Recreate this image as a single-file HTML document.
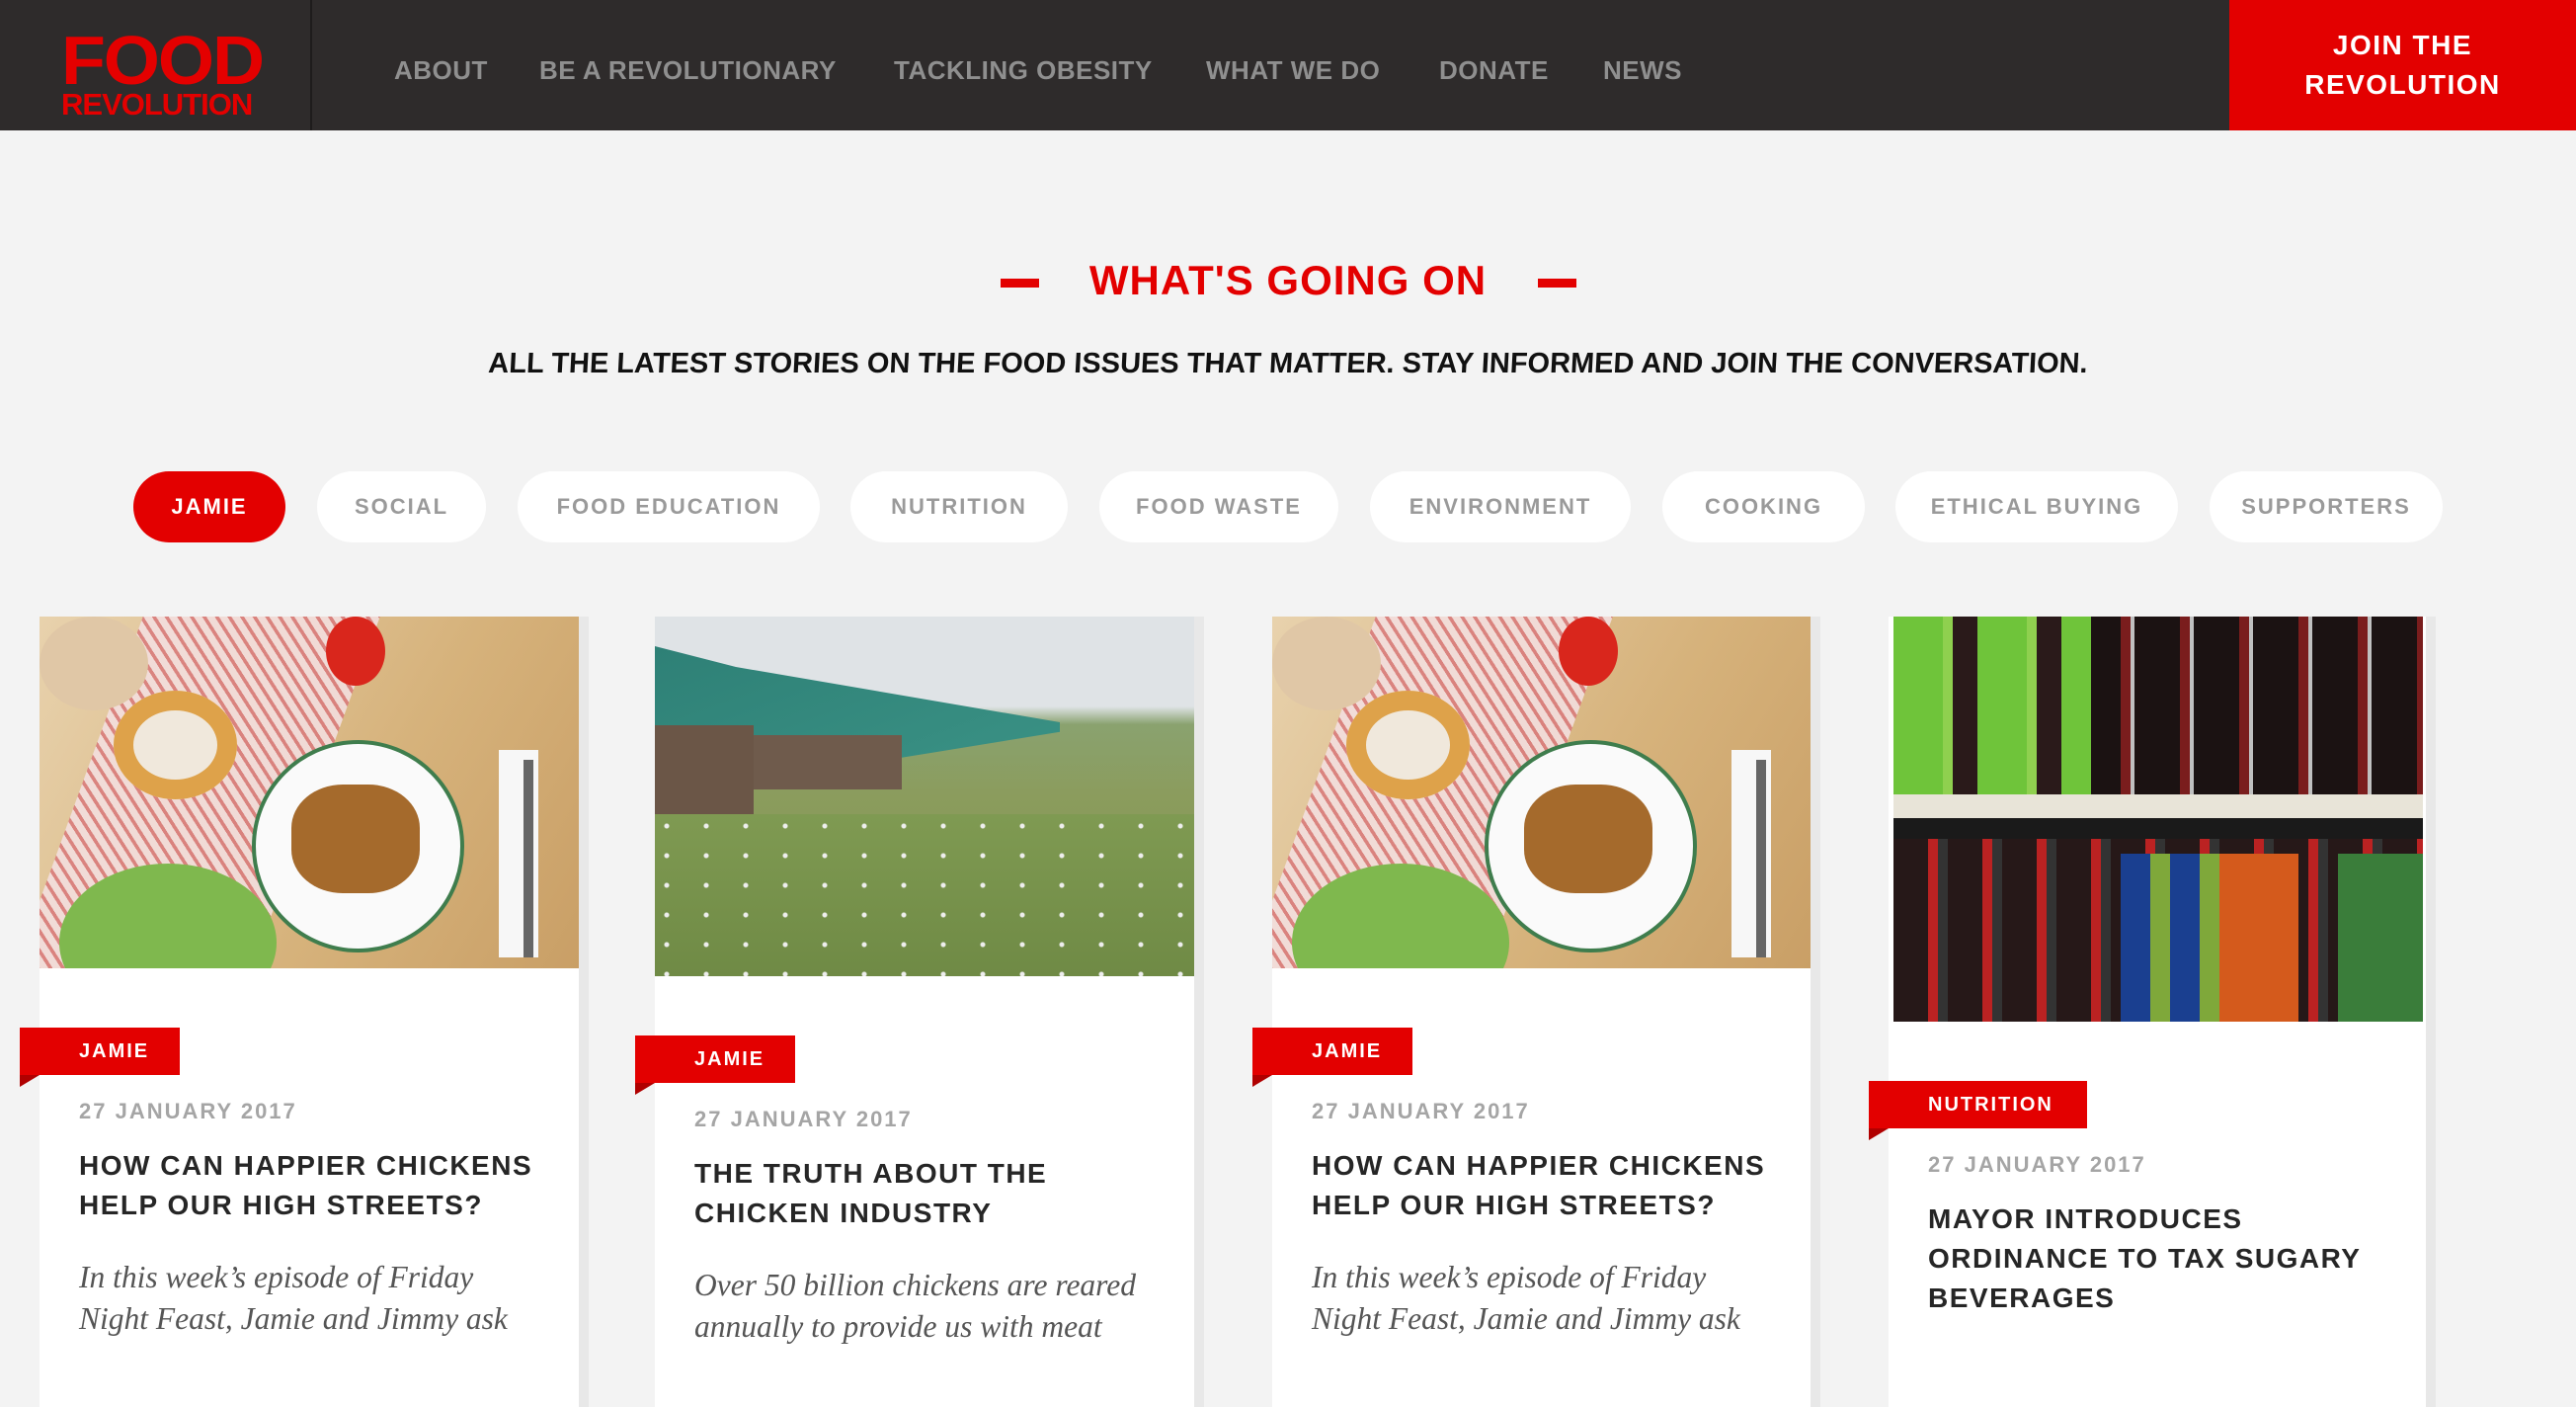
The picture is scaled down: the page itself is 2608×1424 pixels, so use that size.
<!DOCTYPE html>
<html><head><meta charset="utf-8"><style>
*{margin:0;padding:0;box-sizing:border-box}
body{width:2608px;height:1370px;overflow:hidden;background:#f3f3f3;font-family:"Liberation Sans",sans-serif;position:relative}
.hdr{position:absolute;left:0;top:0;width:2608px;height:132px;background:#2e2b2b}
.logo{position:absolute;left:62px;top:26px;color:#e40000;font-weight:bold;line-height:1}
.logo .a{font-size:70px;letter-spacing:-2px;transform:scaleX(1.05);transform-origin:left;display:block;height:62px}
.logo .b{font-size:31px;letter-spacing:-1px;display:block;margin-top:2px}
.div{position:absolute;left:314px;top:0;width:2px;height:132px;background:#1e1c1c}
.nav{position:absolute;top:56px;color:#8f8f8f;font-weight:bold;font-size:26px;letter-spacing:0.5px}
.join{position:absolute;left:2257px;top:0;width:351px;height:132px;background:#e30000;color:#fff;font-weight:bold;font-size:28px;letter-spacing:1.5px;text-align:center;line-height:40px;padding-top:26px}
.title{position:absolute;top:260px;left:0;width:2608px;text-align:center;color:#e30000;font-weight:bold;font-size:42px;letter-spacing:1px}
.dash{position:absolute;top:282px;width:39px;height:9px;background:#e30000}
.sub{position:absolute;top:352px;left:0;width:2608px;text-align:center;font-family:"Liberation Sans Narrow","Liberation Sans",sans-serif;font-weight:bold;font-size:29px;color:#111;transform:skewX(-3deg)}
.pill{position:absolute;top:477px;height:72px;border-radius:36px;background:#fff;color:#9a9a9a;font-weight:bold;font-size:22px;letter-spacing:2px;text-align:center;line-height:72px}
.pill.on{background:#e30000;color:#fff}
.card{position:absolute;top:624px;height:800px;background:#fff;box-shadow:10px 0 0 #e8e8e8}
.img{position:absolute;left:0;top:0;width:100%;overflow:hidden}
.tag{position:absolute;left:-20px;height:48px;width:162px;background:#e30000;color:#fff;font-weight:bold;font-size:20px;letter-spacing:2px;line-height:48px;padding-left:60px;white-space:nowrap}
.tag:after{content:"";position:absolute;left:0;top:48px;border-top:12px solid #b00000;border-left:20px solid transparent;width:0;height:0;transform:scaleX(-1)}
.date{position:absolute;left:40px;color:#a5a5a5;font-weight:bold;font-size:22px;letter-spacing:2px}
.h{position:absolute;left:40px;color:#262626;font-weight:bold;font-size:28px;letter-spacing:1.5px;line-height:40px;white-space:nowrap}
.p{position:absolute;left:40px;color:#555;font-family:"Liberation Serif",serif;font-style:italic;font-size:31.5px;line-height:42px;white-space:nowrap}
</style></head><body>
<div class="hdr">
<div class="logo"><span class="a">FOOD</span><span class="b">REVOLUTION</span></div>
<div class="div"></div>
<div class="nav" style="left:399px">ABOUT</div>
<div class="nav" style="left:546px">BE A REVOLUTIONARY</div>
<div class="nav" style="left:905px">TACKLING OBESITY</div>
<div class="nav" style="left:1221px">WHAT WE DO</div>
<div class="nav" style="left:1457px">DONATE</div>
<div class="nav" style="left:1623px">NEWS</div>
<div class="join">JOIN THE<br>REVOLUTION</div>
</div>
<div class="dash" style="left:1013px"></div><div class="dash" style="left:1557px"></div>
<div class="title">WHAT'S GOING ON</div>
<div class="sub">ALL THE LATEST STORIES ON THE FOOD ISSUES THAT MATTER. STAY INFORMED AND JOIN THE CONVERSATION.</div>

<div class="pill on" style="left:135px;width:154px">JAMIE</div>
<div class="pill" style="left:321px;width:171px">SOCIAL</div>
<div class="pill" style="left:524px;width:306px">FOOD EDUCATION</div>
<div class="pill" style="left:861px;width:220px">NUTRITION</div>
<div class="pill" style="left:1113px;width:242px">FOOD WASTE</div>
<div class="pill" style="left:1387px;width:264px">ENVIRONMENT</div>
<div class="pill" style="left:1683px;width:205px">COOKING</div>
<div class="pill" style="left:1919px;width:286px">ETHICAL BUYING</div>
<div class="pill" style="left:2237px;width:236px">SUPPORTERS</div>

<div class="card" style="left:40px;width:546px">
<div class="img" style="height:356px;background:linear-gradient(120deg,#e8d2ad,#d6b27b 60%,#c99f66)">
<div style="position:absolute;top:0;width:240px;height:356px;background:repeating-linear-gradient(45deg,#f3dede 0 6px,#d97c7c 6px 9px);transform:skewX(-20deg);left:40px;opacity:.9"></div>
<div style="position:absolute;left:0;top:0;width:110px;height:95px;border-radius:50%;background:#e0c7a6"></div>
<div style="position:absolute;left:75px;top:75px;width:125px;height:110px;border-radius:50%;background:#f0e8dc;box-shadow:inset 0 0 0 20px #dea24a"></div>
<div style="position:absolute;left:215px;top:125px;width:215px;height:215px;border-radius:50%;background:#fafafa;border:4px solid #3f7d4d"></div>
<div style="position:absolute;left:255px;top:170px;width:130px;height:110px;border-radius:40%;background:#a56a2c"></div>
<div style="position:absolute;left:20px;top:250px;width:220px;height:160px;border-radius:50%;background:#7fb84e"></div>
<div style="position:absolute;left:290px;top:0;width:60px;height:70px;border-radius:50%;background:#d9261c"></div>
<div style="position:absolute;left:465px;top:135px;width:40px;height:210px;background:#f7f7f7"></div>
<div style="position:absolute;left:490px;top:145px;width:10px;height:200px;background:#666"></div>
</div>
<div class="tag" style="top:416px">JAMIE</div>
<div class="date" style="top:488px">27 JANUARY 2017</div>
<div class="h" style="top:536px">HOW CAN HAPPIER CHICKENS<br>HELP OUR HIGH STREETS?</div>
<div class="p" style="top:648px">In this week’s episode of Friday<br>Night Feast, Jamie and Jimmy ask</div>
</div>

<div class="card" style="left:663px;width:546px">
<div class="img" style="height:364px;background:linear-gradient(180deg,#dfe3e6 0,#dfe3e6 25%,#8aa26f 30%,#8b9c5d 50%,#7d9250 100%)">
<div style="position:absolute;left:0;top:30px;width:410px;height:140px;background:linear-gradient(160deg,#2e8076,#3b9386);clip-path:polygon(0 0,20% 15%,100% 55%,100% 62%,20% 100%,0 100%)"></div>
<div style="position:absolute;left:0;top:110px;width:100px;height:90px;background:#6b5647"></div>
<div style="position:absolute;left:100px;top:120px;width:150px;height:55px;background:#6f5b4c"></div>
<div style="position:absolute;left:0;top:200px;width:546px;height:164px;background:radial-gradient(circle at 30% 40%,#eee 0 2px,transparent 3px) 0 0/40px 30px,linear-gradient(#7f9a52,#6f8a45)"></div>
</div>
<div class="tag" style="top:424px">JAMIE</div>
<div class="date" style="top:496px">27 JANUARY 2017</div>
<div class="h" style="top:544px">THE TRUTH ABOUT THE<br>CHICKEN INDUSTRY</div>
<div class="p" style="top:656px">Over 50 billion chickens are reared<br>annually to provide us with meat</div>
</div>

<div class="card" style="left:1288px;width:545px">
<div class="img" style="height:356px;background:linear-gradient(120deg,#e8d2ad,#d6b27b 60%,#c99f66)">
<div style="position:absolute;top:0;width:240px;height:356px;background:repeating-linear-gradient(45deg,#f3dede 0 6px,#d97c7c 6px 9px);transform:skewX(-20deg);left:40px;opacity:.9"></div>
<div style="position:absolute;left:0;top:0;width:110px;height:95px;border-radius:50%;background:#e0c7a6"></div>
<div style="position:absolute;left:75px;top:75px;width:125px;height:110px;border-radius:50%;background:#f0e8dc;box-shadow:inset 0 0 0 20px #dea24a"></div>
<div style="position:absolute;left:215px;top:125px;width:215px;height:215px;border-radius:50%;background:#fafafa;border:4px solid #3f7d4d"></div>
<div style="position:absolute;left:255px;top:170px;width:130px;height:110px;border-radius:40%;background:#a56a2c"></div>
<div style="position:absolute;left:20px;top:250px;width:220px;height:160px;border-radius:50%;background:#7fb84e"></div>
<div style="position:absolute;left:290px;top:0;width:60px;height:70px;border-radius:50%;background:#d9261c"></div>
<div style="position:absolute;left:465px;top:135px;width:40px;height:210px;background:#f7f7f7"></div>
<div style="position:absolute;left:490px;top:145px;width:10px;height:200px;background:#666"></div>
</div>
<div class="tag" style="top:416px">JAMIE</div>
<div class="date" style="top:488px">27 JANUARY 2017</div>
<div class="h" style="top:536px">HOW CAN HAPPIER CHICKENS<br>HELP OUR HIGH STREETS?</div>
<div class="p" style="top:648px">In this week’s episode of Friday<br>Night Feast, Jamie and Jimmy ask</div>
</div>

<div class="card" style="left:1912px;width:544px">
<div class="img" style="left:5px;width:536px;height:410px;background:#1a1a1a">
<div style="position:absolute;left:0;top:0;width:536px;height:180px;background:repeating-linear-gradient(90deg,#6fc43a 0 50px,#8fd04f 50px 60px,#2a1a1a 60px 85px);"></div>
<div style="position:absolute;left:200px;top:0;width:336px;height:180px;background:repeating-linear-gradient(90deg,#1b1212 0 30px,#7a1d1d 30px 40px,#c0c0c0 40px 44px,#1b1212 44px 60px)"></div>
<div style="position:absolute;left:0;top:180px;width:536px;height:24px;background:#e8e4d8"></div>
<div style="position:absolute;left:0;top:225px;width:536px;height:185px;background:repeating-linear-gradient(90deg,#261818 0 35px,#b22 35px 45px,#333 45px 55px)"></div>
<div style="position:absolute;left:230px;top:240px;width:100px;height:170px;background:repeating-linear-gradient(90deg,#1a3f90 0 30px,#7fa83a 30px 50px)"></div>
<div style="position:absolute;left:330px;top:240px;width:80px;height:170px;background:#d45a1c"></div>
<div style="position:absolute;left:450px;top:240px;width:86px;height:170px;background:#3a7d3a"></div>
</div>
<div class="tag" style="top:470px;width:221px">NUTRITION</div>
<div class="date" style="top:542px">27 JANUARY 2017</div>
<div class="h" style="top:590px">MAYOR INTRODUCES<br>ORDINANCE TO TAX SUGARY<br>BEVERAGES</div>
</div>
</body></html>
